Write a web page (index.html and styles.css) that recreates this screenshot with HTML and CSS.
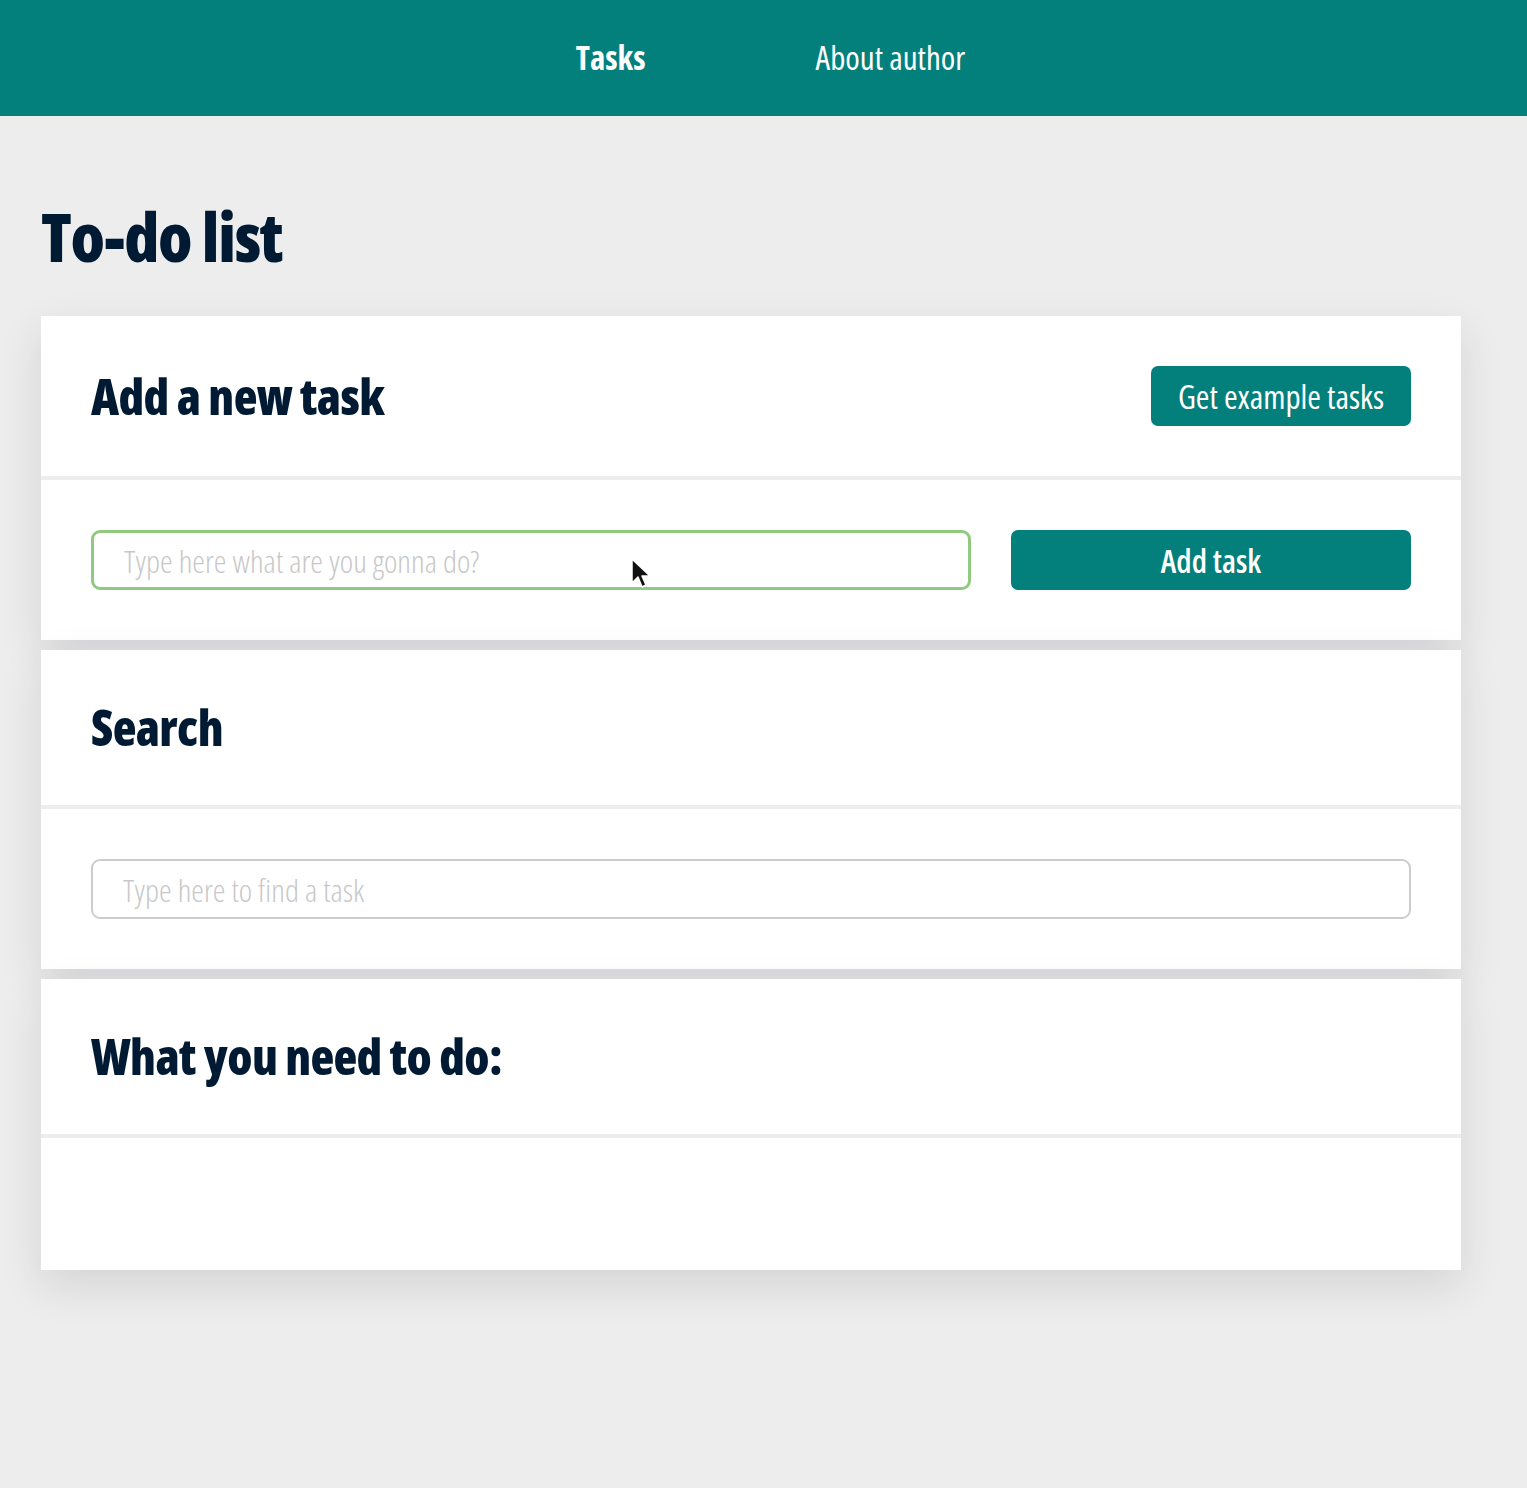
FILE: index.html
```html
<!DOCTYPE html>
<html lang="en">
<head>
<meta charset="utf-8">
<title>To-do list</title>
<link rel="stylesheet" href="styles.css">
</head>
<body>
<nav class="nav">
  <a class="nav-link active" href="#">Tasks</a>
  <a class="nav-link" href="#">About author</a>
</nav>
<main class="page">
  <h1 class="title">To-do list</h1>

  <section class="card">
    <div class="card-head">
      <h2 class="card-title">Add a new task</h2>
      <button class="btn btn-small">Get example tasks</button>
    </div>
    <div class="card-body row">
      <div class="field-wrap">
        <input class="field field-active" type="text" placeholder="Type here what are you gonna do?">
        <svg class="cursor" width="22" height="34" viewBox="0 0 22 34" aria-hidden="true">
          <path d="M2 2 L2 26 L8 20 L12 30 L16 28 L12 19 L20 19 Z" fill="#111" stroke="#fff" stroke-width="1.5" stroke-linejoin="round"/>
        </svg>
      </div>
      <button class="btn btn-wide">Add task</button>
    </div>
  </section>

  <section class="card">
    <div class="card-head">
      <h2 class="card-title">Search</h2>
    </div>
    <div class="card-body">
      <input class="field field-search" type="text" placeholder="Type here to find a task">
    </div>
  </section>

  <section class="card">
    <div class="card-head">
      <h2 class="card-title">What you need to do:</h2>
    </div>
    <div class="card-body list"></div>
  </section>
</main>
</body>
</html>
```

FILE: styles.css
```css
* {
  box-sizing: border-box;
}

html, body {
  margin: 0;
  padding: 0;
}

body {
  background: #ededed;
  font-family: "Open Sans", "DejaVu Sans Condensed", "Liberation Sans", sans-serif;
  font-stretch: 75%;
  color: #021a33;
  min-height: 1488px;
}

.nav {
  height: 116px;
  background: #03807c;
  display: flex;
  justify-content: center;
  align-items: center;
  gap: 170px;
  padding-left: 14px;
}

.nav-link {
  color: #ffffff;
  text-decoration: none;
  font-size: 33px;
  font-weight: 400;
  line-height: 40px;
}

.nav-link.active {
  font-weight: 700;
}

.page {
  width: 1420px;
  margin-left: 41px;
  padding-bottom: 100px;
}

.title {
  margin: 80px 0 40px;
  font-size: 67px;
  line-height: 80px;
  font-weight: 800;
  letter-spacing: -1.3px;
  color: #011a33;
}

.card {
  background: #ffffff;
  margin-bottom: 10px;
  box-shadow: 0 16px 40px rgba(40, 40, 60, 0.12);
  position: relative;
}

.card-head {
  padding: 50px;
  display: flex;
  justify-content: space-between;
  align-items: center;
  border-bottom: 4px solid #ededed;
  min-height: 155px;
}

.card:first-of-type .card-head {
  min-height: 164px;
}

.card-title {
  margin: 0;
  font-size: 49px;
  line-height: 55px;
  font-weight: 800;
  letter-spacing: -0.6px;
  color: #011a33;
}

.card-body {
  padding: 50px;
  height: 160px;
}

.card-body.list {
  height: 132px;
}

.row {
  display: flex;
  gap: 40px;
}

.btn {
  background: #03807c;
  color: #ffffff;
  border: none;
  border-radius: 7px;
  height: 60px;
  font-family: inherit;
  font-stretch: 75%;
  font-size: 33px;
  font-weight: 500;
  white-space: nowrap;
  cursor: pointer;
}

.btn-small {
  width: 260px;
}

.btn-wide {
  width: 400px;
  font-size: 32px;
  font-weight: 600;
}

.field-wrap {
  position: relative;
  width: 880px;
}

.field {
  width: 100%;
  height: 60px;
  border-radius: 9px;
  background: #ffffff;
  padding: 0 30px;
  font-family: inherit;
  font-stretch: 75%;
  font-size: 32px;
  font-weight: 300;
  color: #333;
  outline: none;
}

.field::placeholder {
  color: #c8c8c8;
  font-weight: 300;
}

.field-active {
  border: 3px solid #8fca80;
}

.field-search {
  border: 2px solid #cccccc;
}

.cursor {
  position: absolute;
  left: 539px;
  top: 27px;
}
```
